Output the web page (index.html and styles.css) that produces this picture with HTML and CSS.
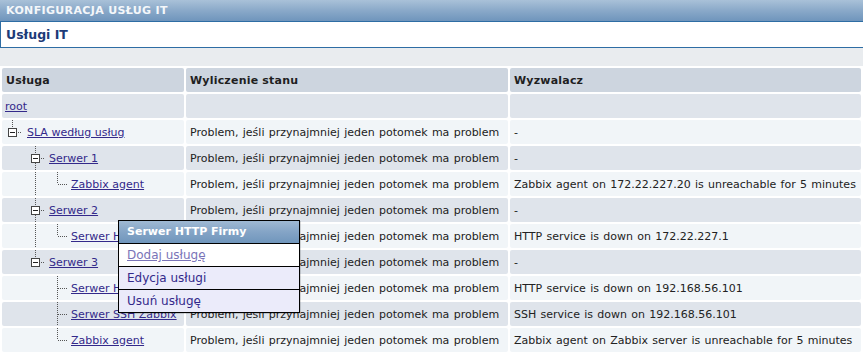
FILE: index.html
```html
<!DOCTYPE html>
<html lang="pl">
<head>
<meta charset="utf-8">
<title>Usługi IT</title>
<link rel="stylesheet" href="styles.css">
</head>
<body>
<div class="titlebar">KONFIGURACJA USŁUG IT</div>
<div class="subbox">Usługi IT</div>
<div class="spacer"></div>
<table class="grid">
  <colgroup><col class="c1"><col class="c2"><col class="c3"></colgroup>
  <thead>
    <tr><th>Usługa</th><th>Wyliczenie stanu</th><th>Wyzwalacz</th></tr>
  </thead>
  <tbody>
    <tr class="dark"><td><div class="node"><a href="#">root</a></div></td><td></td><td></td></tr>
    <tr class="light"><td><div class="node">
      <svg class="tile" viewBox="0 0 22 24"><line class="dl" x1="7.5" y1="0" x2="7.5" y2="8"/><rect class="box" x="3.5" y="8.5" width="8" height="8"/><line class="mn" x1="5" y1="12.5" x2="10" y2="12.5"/><line class="dl" x1="13" y1="12.5" x2="17" y2="12.5"/></svg>
      <a href="#">SLA według usług</a></div></td>
      <td>Problem, jeśli przynajmniej jeden potomek ma problem</td><td>-</td></tr>
    <tr class="dark"><td><div class="node">
      <span class="blank"></span>
      <svg class="tile" viewBox="0 0 22 24"><line class="dl" x1="8.5" y1="0" x2="8.5" y2="8"/><line class="dl" x1="8.5" y1="17" x2="8.5" y2="24"/><rect class="box" x="4.5" y="8.5" width="8" height="8"/><line class="mn" x1="6" y1="12.5" x2="11" y2="12.5"/><line class="dl" x1="14" y1="12.5" x2="18" y2="12.5"/></svg>
      <a href="#">Serwer 1</a></div></td>
      <td>Problem, jeśli przynajmniej jeden potomek ma problem</td><td>-</td></tr>
    <tr class="light"><td><div class="node">
      <span class="blank"></span>
      <svg class="tile" viewBox="0 0 22 24"><line class="dl" x1="8.5" y1="0" x2="8.5" y2="24"/></svg>
      <svg class="tile" viewBox="0 0 22 24"><line class="dl" x1="8.5" y1="0" x2="8.5" y2="12"/><line class="dl" x1="9" y1="12.5" x2="18" y2="12.5"/></svg>
      <a href="#">Zabbix agent</a></div></td>
      <td>Problem, jeśli przynajmniej jeden potomek ma problem</td><td>Zabbix agent on 172.22.227.20 is unreachable for 5 minutes</td></tr>
    <tr class="dark"><td><div class="node">
      <span class="blank"></span>
      <svg class="tile" viewBox="0 0 22 24"><line class="dl" x1="8.5" y1="0" x2="8.5" y2="8"/><line class="dl" x1="8.5" y1="17" x2="8.5" y2="24"/><rect class="box" x="4.5" y="8.5" width="8" height="8"/><line class="mn" x1="6" y1="12.5" x2="11" y2="12.5"/><line class="dl" x1="14" y1="12.5" x2="18" y2="12.5"/></svg>
      <a href="#">Serwer 2</a></div></td>
      <td>Problem, jeśli przynajmniej jeden potomek ma problem</td><td>-</td></tr>
    <tr class="light"><td><div class="node">
      <span class="blank"></span>
      <svg class="tile" viewBox="0 0 22 24"><line class="dl" x1="8.5" y1="0" x2="8.5" y2="24"/></svg>
      <svg class="tile" viewBox="0 0 22 24"><line class="dl" x1="8.5" y1="0" x2="8.5" y2="12"/><line class="dl" x1="9" y1="12.5" x2="18" y2="12.5"/></svg>
      <a href="#">Serwer HTTP Firmy</a></div></td>
      <td>Problem, jeśli przynajmniej jeden potomek ma problem</td><td>HTTP service is down on 172.22.227.1</td></tr>
    <tr class="dark"><td><div class="node">
      <span class="blank"></span>
      <svg class="tile" viewBox="0 0 22 24"><line class="dl" x1="8.5" y1="0" x2="8.5" y2="8"/><rect class="box" x="4.5" y="8.5" width="8" height="8"/><line class="mn" x1="6" y1="12.5" x2="11" y2="12.5"/><line class="dl" x1="14" y1="12.5" x2="18" y2="12.5"/></svg>
      <a href="#">Serwer 3</a></div></td>
      <td>Problem, jeśli przynajmniej jeden potomek ma problem</td><td>-</td></tr>
    <tr class="light"><td><div class="node">
      <span class="blank"></span>
      <span class="blank"></span>
      <svg class="tile" viewBox="0 0 22 24"><line class="dl" x1="8.5" y1="0" x2="8.5" y2="24"/><line class="dl" x1="9" y1="12.5" x2="18" y2="12.5"/></svg>
      <a href="#">Serwer HTTP Zabbix</a></div></td>
      <td>Problem, jeśli przynajmniej jeden potomek ma problem</td><td>HTTP service is down on 192.168.56.101</td></tr>
    <tr class="dark"><td><div class="node">
      <span class="blank"></span>
      <span class="blank"></span>
      <svg class="tile" viewBox="0 0 22 24"><line class="dl" x1="8.5" y1="0" x2="8.5" y2="24"/><line class="dl" x1="9" y1="12.5" x2="18" y2="12.5"/></svg>
      <a href="#">Serwer SSH Zabbix</a></div></td>
      <td>Problem, jeśli przynajmniej jeden potomek ma problem</td><td>SSH service is down on 192.168.56.101</td></tr>
    <tr class="light"><td><div class="node">
      <span class="blank"></span>
      <span class="blank"></span>
      <svg class="tile" viewBox="0 0 22 24"><line class="dl" x1="8.5" y1="0" x2="8.5" y2="12"/><line class="dl" x1="9" y1="12.5" x2="18" y2="12.5"/></svg>
      <a href="#">Zabbix agent</a></div></td>
      <td>Problem, jeśli przynajmniej jeden potomek ma problem</td><td>Zabbix agent on Zabbix server is unreachable for 5 minutes</td></tr>
  </tbody>
</table>

<div class="menu">
  <div class="menu-head">Serwer HTTP Firmy</div>
  <div class="menu-item first"><a href="#">Dodaj usługę</a></div>
  <div class="menu-item">Edycja usługi</div>
  <div class="menu-item">Usuń usługę</div>
</div>
</body>
</html>
```

FILE: styles.css
```css
html, body {
  margin: 0;
  padding: 0;
}
body {
  width: 863px;
  height: 354px;
  overflow: hidden;
  background: #ffffff;
  font-family: "DejaVu Sans", Verdana, sans-serif;
  font-size: 11px;
  color: #222222;
  position: relative;
}
.titlebar {
  height: 21px;
  line-height: 21px;
  padding-left: 6px;
  background: linear-gradient(to bottom, #a9c1d8 0%, #8aa9c9 50%, #6f95bc 100%);
  color: #f4f7fa;
  font-weight: bold;
  font-size: 11px;
  letter-spacing: 0.35px;
}
.subbox {
  height: 25px;
  line-height: 25px;
  padding-left: 5px;
  border-top: 1px solid #2e6da4;
  border-bottom: 1px solid #2e6da4;
  border-left: 1px solid #2e6da4;
  background: #ffffff;
  color: #1c3b78;
  font-weight: bold;
  font-size: 12.5px;
}
.spacer {
  height: 18px;
  background: #e9ecef;
}
.grid {
  width: 863px;
  table-layout: fixed;
  border-collapse: separate;
  border-spacing: 2px;
  background: #ffffff;
}
.c1 { width: 182px; }
.c2 { width: 322px; }
.grid th, .grid td {
  height: 24px;
  padding: 0 3px 0 4px;
  border-radius: 2px;
  white-space: nowrap;
  overflow: hidden;
  text-align: left;
  vertical-align: middle;
}
.grid td {
  word-spacing: 0.8px;
}
.grid td:first-child {
  padding-left: 3px;
  word-spacing: 0;
}
.grid th {
  background: #cdd5df;
  font-weight: bold;
  color: #1f1f1f;
  letter-spacing: 0.2px;
}
.grid tr.dark td { background: #dfe4eb; }
.grid tr.light td { background: #f1f5f8; }
.node {
  display: flex;
  align-items: center;
  height: 24px;
}
.tile {
  width: 22px;
  height: 24px;
  flex: none;
}
.blank {
  width: 22px;
  height: 24px;
  flex: none;
}
.dl {
  stroke: #555555;
  stroke-width: 1;
  stroke-dasharray: 1 1;
}
.box {
  fill: #ffffff;
  stroke: #444444;
  stroke-width: 1;
}
.mn {
  stroke: #222222;
  stroke-width: 1;
}
a {
  color: #33298a;
  text-decoration: underline;
}
.menu {
  position: absolute;
  left: 118px;
  top: 220px;
  width: 180px;
  border: 1px solid #000000;
  background: #ebebfa;
  box-shadow: 1px 1px 0 rgba(0,0,0,0.15);
}
.menu-head {
  height: 22px;
  line-height: 22px;
  padding-left: 8px;
  background: linear-gradient(to bottom, #9fb9d3 0%, #84a4c6 50%, #7096bc 100%);
  color: #ffffff;
  font-weight: bold;
  font-size: 11px;
  border-bottom: 1px solid #000000;
}
.menu-item {
  height: 22px;
  line-height: 22px;
  padding-left: 8px;
  font-size: 12px;
  color: #33298a;
  border-bottom: 1px solid #000000;
}
.menu-item:last-child {
  border-bottom: none;
}
.menu-item.first {
  background: #ffffff;
}
.menu-item.first a {
  color: #7a74b8;
}
```
